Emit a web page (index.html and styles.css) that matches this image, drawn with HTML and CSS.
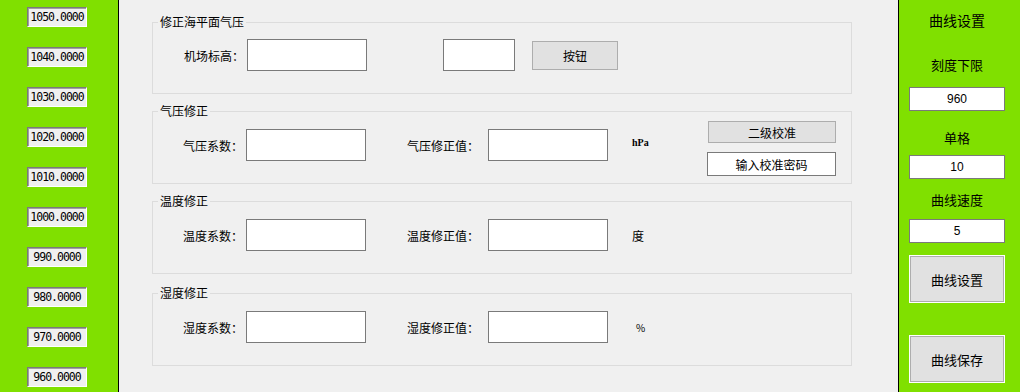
FILE: index.html
```html
<!DOCTYPE html>
<html>
<head>
  <meta charset="utf-8">
  <title>曲线设置</title>
  <link rel="stylesheet" href="styles.css">
</head>
<body>
  <div class="app">
    <aside class="scale">
      <div class="tick">1050.0000</div>
      <div class="tick">1040.0000</div>
      <div class="tick">1030.0000</div>
      <div class="tick">1020.0000</div>
      <div class="tick">1010.0000</div>
      <div class="tick">1000.0000</div>
      <div class="tick">990.0000</div>
      <div class="tick">980.0000</div>
      <div class="tick">970.0000</div>
      <div class="tick">960.0000</div>
    </aside>

    <main class="main">
      <fieldset class="group group-first">
        <legend>修正海平面气压</legend>
        <div class="row">
          <label class="lbl lbl-a lbl-shift">机场标高：</label>
          <input class="box" type="text">
          <input class="box box-sm" type="text">
          <button class="btn btn-plain" type="button">按钮</button>
        </div>
      </fieldset>

      <fieldset class="group">
        <legend>气压修正</legend>
        <div class="row">
          <label class="lbl lbl-a">气压系数：</label>
          <input class="box" type="text">
          <label class="lbl lbl-b">气压修正值：</label>
          <input class="box" type="text">
          <span class="unit unit-hpa">hPa</span>
          <div class="btn-col">
            <button class="btn btn-level" type="button">二级校准</button>
            <button class="btn btn-pass" type="button">输入校准密码</button>
          </div>
        </div>
      </fieldset>

      <fieldset class="group">
        <legend>温度修正</legend>
        <div class="row">
          <label class="lbl lbl-a">温度系数：</label>
          <input class="box" type="text">
          <label class="lbl lbl-b">温度修正值：</label>
          <input class="box" type="text">
          <span class="unit">度</span>
        </div>
      </fieldset>

      <fieldset class="group group-last">
        <legend>湿度修正</legend>
        <div class="row">
          <label class="lbl lbl-a">湿度系数：</label>
          <input class="box" type="text">
          <label class="lbl lbl-b">湿度修正值：</label>
          <input class="box" type="text">
          <span class="unit unit-pct">%</span>
        </div>
      </fieldset>
    </main>

    <aside class="side">
      <div class="side-title">曲线设置</div>
      <div class="side-label label-low">刻度下限</div>
      <input class="side-input input-low" type="text" value="960">
      <div class="side-label label-cell">单格</div>
      <input class="side-input input-cell" type="text" value="10">
      <div class="side-label label-speed">曲线速度</div>
      <input class="side-input input-speed" type="text" value="5">
      <button class="side-btn btn-set" type="button">曲线设置</button>
      <button class="side-btn btn-save" type="button">曲线保存</button>
    </aside>
  </div>
</body>
</html>
```

FILE: styles.css
```css
body {
  margin: 0;
  background: #f0f0f0;
  font-family: "Noto Sans CJK SC", "Liberation Sans", sans-serif;
  font-size: 12px;
  color: #000;
}

.app {
  display: flex;
  height: 392px;
  overflow: hidden;
}

/* left scale */
.scale {
  width: 119px;
  box-sizing: border-box;
  background: #80e000;
  border-right: 1px solid #000;
  padding: 7px 0 0 27px;
  display: flex;
  flex-direction: column;
  gap: 20px;
}

.tick {
  width: 60px;
  height: 20px;
  box-sizing: border-box;
  background: #f0f0f0;
  border: 1px solid;
  border-color: #7a7a7a #fff #fff #7a7a7a;
  box-shadow: inset 1px 1px 0 #a0a0a0;
  font-family: "DejaVu Sans Mono", "Liberation Mono", monospace;
  font-size: 11.5px;
  letter-spacing: -1px;
  line-height: 18px;
  text-align: center;
  white-space: nowrap;
}

/* middle */
.main {
  flex: 1;
  padding: 15px 0 0 33px;
}

.group {
  width: 700px;
  box-sizing: border-box;
  margin: 10px 0 0 0;
  padding: 11px 0 22px 0;
  border: 1px solid #dcdcdc;
  min-width: 0;
}

.group-first {
  margin-top: 0;
  padding-top: 10px;
}

.group-last {
  margin-top: 12px;
}

.group legend {
  margin-left: 5px;
  padding: 0 2px;
  line-height: 14px;
}

.row {
  display: flex;
  align-items: center;
  height: 32px;
  padding-left: 30px;
}

.lbl {
  white-space: nowrap;
}

.lbl-a {
  width: 63px;
}

.lbl-shift {
  width: 63px;
  margin-left: 1px;
}

.lbl-b {
  width: 81px;
  margin-left: 41px;
}

.box {
  width: 120px;
  height: 32px;
  box-sizing: border-box;
  margin: 0;
  border: 1px solid #7a7a7a;
  background: #fff;
}

.box-sm {
  width: 72px;
  margin-left: 76px;
}

.unit {
  margin-left: 24px;
}

.unit-hpa {
  font-family: "Liberation Serif", serif;
  font-weight: bold;
  font-size: 10px;
  margin-top: -6px;
}

.unit-pct {
  margin-left: 28px;
  font-size: 10px;
}

.btn {
  font-family: inherit;
  font-size: 12px;
  padding: 0;
  margin: 0;
  box-sizing: border-box;
  color: #000;
}

.btn-plain {
  width: 86px;
  height: 29px;
  margin-left: 17px;
  background: #e1e1e1;
  border: 1px solid #adadad;
}

.btn-col {
  margin: -8px 15px -15px auto;
  width: 129px;
  display: flex;
  flex-direction: column;
  align-items: flex-end;
  gap: 9px;
}

.btn-level {
  width: 128px;
  height: 22px;
  background: #e1e1e1;
  border: 1px solid #adadad;
}

.btn-pass {
  width: 129px;
  height: 24px;
  background: #fff;
  border: 1px solid #7a7a7a;
}

/* right panel */
.side {
  width: 122px;
  box-sizing: border-box;
  background: #80e000;
  border-left: 1px solid #000;
  padding: 10px 0 0 10px;
  display: flex;
  flex-direction: column;
  align-items: flex-start;
}

.side-title {
  width: 96px;
  text-align: center;
  font-size: 14px;
  line-height: 20px;
}

.side-label {
  width: 96px;
  text-align: center;
  font-size: 13px;
  line-height: 16px;
}

.label-low { margin-top: 27px; }
.label-cell { margin-top: 19px; }
.label-speed { margin-top: 13px; }

.side-input {
  width: 96px;
  height: 24px;
  box-sizing: border-box;
  margin: 0;
  border: 1px solid #7a7a7a;
  background: #fff;
  text-align: center;
  font-family: "Liberation Sans", sans-serif;
  font-size: 12px;
  padding: 0;
}

.input-low { margin-top: 14px; }
.input-cell { margin-top: 9px; }
.input-speed { margin-top: 11px; }

.side-btn {
  width: 96px;
  height: 48px;
  box-sizing: border-box;
  margin: 12px 0 0 0;
  padding: 0;
  background: #e1e1e1;
  border: 1px solid #fff;
  box-shadow: inset 0 0 0 1px #adadad;
  font-family: inherit;
  font-size: 13px;
  color: #000;
}

.btn-save {
  margin-top: 32px;
}
```
